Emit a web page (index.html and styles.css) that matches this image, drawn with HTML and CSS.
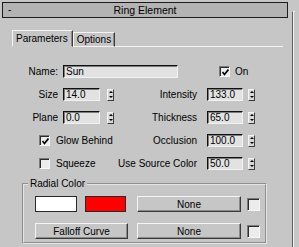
FILE: index.html
```html
<!DOCTYPE html>
<html lang="en">
<head>
    <meta charset="UTF-8">
    <meta name="viewport" content="width=device-width, initial-scale=1.0">
    <title>Ring Element</title>
    <link rel="stylesheet" href="styles.css">
</head>
<body>
    <div class="window">
        <div class="panel">
            <div class="rollout-title">
                <span class="minus">-</span>
                <span class="title-text">Ring Element</span>
            </div>

            <div class="tabs">
                <div class="tab active">Parameters</div>
                <div class="tab">Options</div>
                <div class="tab-fill"></div>
            </div>

            <div class="params">
                <span class="lbl">Name:</span>
                <div class="field name-field">Sun</div>
                <div class="check on-check">
                    <span class="box"><svg width="7" height="7" viewBox="0 0 7 7"><polyline points="0.5,3 2.5,5.5 6.5,0.5" fill="none" stroke="#000" stroke-width="1.7"/></svg></span>On
                </div>

                <span class="lbl">Size</span>
                <div class="field">14.0</div>
                <div class="spin"><i class="up"></i><i class="down"></i></div>
                <span class="lbl right">Intensity</span>
                <div class="field r">133.0</div>
                <div class="spin"><i class="up"></i><i class="down"></i></div>

                <span class="lbl">Plane</span>
                <div class="field">0.0</div>
                <div class="spin"><i class="up"></i><i class="down"></i></div>
                <span class="lbl right">Thickness</span>
                <div class="field r">65.0</div>
                <div class="spin"><i class="up"></i><i class="down"></i></div>

                <div class="check wide">
                    <span class="box"><svg width="7" height="7" viewBox="0 0 7 7"><polyline points="0.5,3 2.5,5.5 6.5,0.5" fill="none" stroke="#000" stroke-width="1.7"/></svg></span>Glow Behind
                </div>
                <span class="lbl right">Occlusion</span>
                <div class="field r">100.0</div>
                <div class="spin"><i class="up"></i><i class="down"></i></div>

                <div class="check wide">
                    <span class="box"></span>Squeeze
                </div>
                <span class="lbl right">Use Source Color</span>
                <div class="field r">50.0</div>
                <div class="spin"><i class="up"></i><i class="down"></i></div>
            </div>

            <fieldset class="group">
                <legend>Radial Color</legend>
                <div class="group-grid">
                    <div class="swatches">
                        <span class="swatch white"></span>
                        <span class="swatch red"></span>
                    </div>
                    <div class="btn none-btn">None</div>
                    <span class="box mini"></span>

                    <div class="btn falloff-btn">Falloff Curve</div>
                    <div class="btn none-btn">None</div>
                    <span class="box mini"></span>
                </div>
            </fieldset>
        </div>
        <div class="scroll"><div class="track"></div></div>
    </div>
</body>
</html>
```

FILE: styles.css
```css
* {
    box-sizing: border-box;
}

body {
    margin: 0;
    background: #c6c6c6;
    font-family: "Liberation Sans", Arial, sans-serif;
    font-size: 10px;
    color: #000;
}

.window {
    display: flex;
    width: 299px;
    height: 247px;
    overflow: hidden;
}

.panel {
    width: 290px;
}

/* rollout header bar */
.rollout-title {
    margin: 2px 0 0 2px;
    width: 286px;
    height: 16px;
    border: 1px solid #1c1c1c;
    background: #b3b3b3;
    display: grid;
    grid-template-columns: 1fr auto 1fr;
    align-items: center;
    line-height: 12px;
}

.minus {
    padding-left: 5px;
}

.title-text {
    font-size: 10.5px;
}

/* tabs */
.tabs {
    margin: 12px 0 0 12px;
    width: 271px;
    display: flex;
    align-items: flex-end;
}

.tab {
    height: 15px;
    padding: 0 3px;
    display: flex;
    align-items: center;
    border-top: 1px solid #f4f4f4;
    border-left: 1px solid #f4f4f4;
    border-right: 1px solid #3c3c3c;
    border-bottom: 1px solid #f4f4f4;
    box-shadow: inset -1px 0 0 #8a8a8a;
    white-space: nowrap;
}

.tab.active {
    height: 17px;
    padding: 0 4px 0 3px;
    border-bottom-color: #c6c6c6;
}

.tab-fill {
    flex: 1;
    border-bottom: 1px solid #f4f4f4;
}

/* parameter grid */
.params {
    margin-top: 18px;
    display: grid;
    grid-template-columns: 59px 47px 9px 89px 43px 10px;
    grid-auto-rows: 13px;
    row-gap: 10px;
    align-items: center;
}

.lbl {
    text-align: right;
    padding-right: 1px;
    white-space: nowrap;
}

.lbl.right {
    padding-right: 7px;
}

.field {
    width: 37px;
    height: 13px;
    margin-left: 4px;
    padding-left: 2px;
    line-height: 11px;
    background: #e2e2e2;
    border-top: 1px solid #101010;
    border-left: 1px solid #101010;
    border-right: 1px solid #f2f2f2;
    border-bottom: 1px solid #f2f2f2;
    box-shadow: inset 1px 1px 0 #7c7c7c;
}

.field.r {
    width: 36px;
    margin-left: 3px;
}

.name-field {
    grid-column: 2 / 5;
    width: 115px;
}

.spin {
    width: 7px;
    height: 12px;
    margin-left: 1px;
    display: flex;
    flex-direction: column;
    justify-content: space-around;
    align-items: center;
    background: #d8d8d8;
    border: 1px solid;
    border-color: #f4f4f4 #3c3c3c #3c3c3c #f4f4f4;
}

.spin i {
    width: 0;
    height: 0;
    border-left: 2px solid transparent;
    border-right: 2px solid transparent;
}

.spin .up {
    border-bottom: 2px solid #000;
}

.spin .down {
    border-top: 2px solid #000;
}

/* checkboxes */
.check {
    display: flex;
    align-items: center;
    gap: 6px;
    white-space: nowrap;
}

.check.wide {
    grid-column: 1 / 4;
    margin-left: 39px;
}

.on-check {
    grid-column: 5 / 7;
    margin-left: 15px;
    gap: 5px;
}

.box {
    width: 11px;
    height: 11px;
    display: flex;
    align-items: center;
    justify-content: center;
    background: #ececec;
    border: 1px solid;
    border-color: #7a7a7a #f6f6f6 #f6f6f6 #7a7a7a;
    box-shadow: inset 1px 1px 0 #2c2c2c;
}

.box svg {
    margin: 1px 0 0 1px;
}

/* radial color group */
.group {
    margin: 8px 0 0 22px;
    width: 245px;
    min-width: 0;
    padding: 6px 0 3px 11px;
    border: 2px groove #e4e4e4;
}

.group legend {
    margin-left: -7px;
    padding: 0 2px;
    line-height: 12px;
}

.group-grid {
    display: grid;
    grid-template-columns: 102px 110px 13px;
    grid-template-rows: 16px 16px;
    row-gap: 11px;
    align-items: center;
}

.swatches {
    display: flex;
    gap: 8px;
    height: 16px;
}

.swatch {
    width: 42px;
    height: 16px;
    border: 1px solid #2a2a2a;
    background: #fff;
}

.swatch.red {
    width: 41px;
    background: #ff0000;
}

.btn {
    height: 16px;
    display: flex;
    align-items: center;
    justify-content: center;
    border: 1px solid;
    border-color: #f4f4f4 #3a3a3a #3a3a3a #f4f4f4;
    box-shadow: inset -1px -1px 0 #8a8a8a;
    white-space: nowrap;
}

.none-btn {
    width: 104px;
}

.falloff-btn {
    width: 93px;
}

.box.mini {
    width: 13px;
    height: 13px;
}

/* right scroll strip */
.scroll {
    width: 9px;
    padding-top: 11px;
    display: flex;
}

.track {
    width: 3px;
    margin-left: 2px;
    border-top: 1px solid #f0f0f0;
    border-left: 1px solid #5e5e5e;
    box-shadow: inset 1px 0 0 #f4f4f4;
}
```
